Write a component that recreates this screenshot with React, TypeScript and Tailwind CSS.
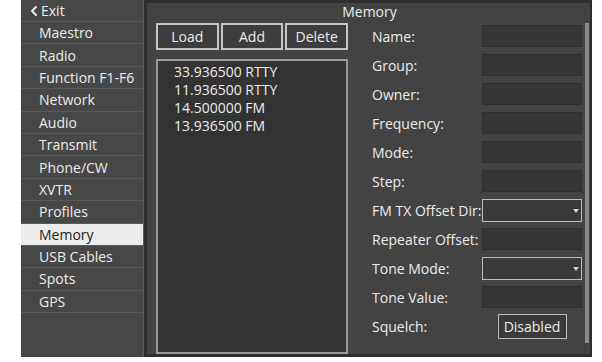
import { ChevronLeft } from "lucide-react"

const menu = [
  "Maestro",
  "Radio",
  "Function F1-F6",
  "Network",
  "Audio",
  "Transmit",
  "Phone/CW",
  "XVTR",
  "Profiles",
  "Memory",
  "USB Cables",
  "Spots",
  "GPS",
]

const memories = ["33.936500 RTTY", "11.936500 RTTY", "14.500000 FM", "13.936500 FM"]

type Field = { label: string; kind: "input" | "select" | "button" }

const fields: Field[] = [
  { label: "Name:", kind: "input" },
  { label: "Group:", kind: "input" },
  { label: "Owner:", kind: "input" },
  { label: "Frequency:", kind: "input" },
  { label: "Mode:", kind: "input" },
  { label: "Step:", kind: "input" },
  { label: "FM TX Offset Dir:", kind: "select" },
  { label: "Repeater Offset:", kind: "input" },
  { label: "Tone Mode:", kind: "select" },
  { label: "Tone Value:", kind: "input" },
  { label: "Squelch:", kind: "button" },
]

function FieldControl({ kind }: { kind: Field["kind"] }) {
  if (kind === "select") {
    return (
      <div className="relative h-[23px] w-[100px] border border-[#bdbdbd] bg-[#3a3a3a]">
        <span className="absolute right-[2px] top-[9px] h-0 w-0 border-x-[3px] border-t-[4px] border-x-transparent border-t-[#d0d0d0]" />
      </div>
    )
  }
  if (kind === "button") {
    return (
      <div className="flex w-[100px] justify-center">
        <button className="h-[25px] w-[69px] border border-[#bdbdbd] bg-[#3a3a3a] text-[14px] text-[#ececec]">
          Disabled
        </button>
      </div>
    )
  }
  return <div className="h-[22px] w-[100px] border border-[#2e2e2e] bg-[#373737]" />
}

export default function App() {
  return (
    <div
      className="flex h-[362px] w-[602px] bg-white"
      style={{ fontFamily: '"Open Sans", "Noto Sans", sans-serif' }}
    >
      {/* sidebar */}
      <div className="ml-[21px] flex h-[357px] w-[123px] flex-col border-r border-[#5c5c5c] bg-[#474747]">
        <div className="flex h-[22px] items-center border-b border-[#5a5a5a] pl-[5px] text-[14px] text-[#ececec]">
          <ChevronLeft className="h-[16px] w-[16px]" strokeWidth={3} />
          <span className="-ml-[1px]">Exit</span>
        </div>
        {menu.map((m) => (
          <div
            key={m}
            className={`flex h-[22.4px] items-center border-b border-[#5a5a5a] pl-[18px] text-[14px] ${
              m === "Memory" ? "bg-[#ececec] text-[#222]" : "text-[#ececec]"
            }`}
          >
            {m}
          </div>
        ))}
      </div>

      <div className="h-[357px] w-[3px] bg-[#2f2f2f]" />

      {/* main panel */}
      <div className="flex h-[357px] w-[445px] flex-col border-t-[3px] border-b-[3px] border-r-[2px] border-[#2e2e2e] bg-[#434343]">
        <div className="flex h-[17px] items-center justify-center pl-[2px] text-[14px] text-[#ececec]">Memory</div>
        <div className="flex flex-1 pl-[9px]">
          {/* left column */}
          <div className="flex w-[192px] flex-col pt-[3px]">
            <div className="flex gap-[2px]">
              {["Load", "Add", "Delete"].map((b) => (
                <button
                  key={b}
                  className="h-[27px] w-[63px] border-2 border-[#c4c4c4] bg-[#3d3d3d] text-[14px] text-[#ececec]"
                >
                  {b}
                </button>
              ))}
            </div>
            <div className="mt-[9px] flex-1 border-2 border-[#9a9a9a] bg-[#333333] pl-[16px] pt-[2px]">
              {memories.map((m) => (
                <div key={m} className="h-[18px] text-[14px] leading-[18px] text-[#ececec]">
                  {m}
                </div>
              ))}
            </div>
          </div>

          {/* right column */}
          <div className="ml-[24px] flex flex-col gap-[7px] pt-[5px]">
            {fields.map((f) => (
              <div key={f.label} className="flex h-[22px] items-center">
                <span className="w-[110px] whitespace-nowrap text-[14px] text-[#ececec]">{f.label}</span>
                <FieldControl kind={f.kind} />
              </div>
            ))}
          </div>

          <div className="ml-[3px] mt-[3px] h-[320px] w-[4px] bg-[#8a8a8a]" />
        </div>
      </div>
    </div>
  )
}
